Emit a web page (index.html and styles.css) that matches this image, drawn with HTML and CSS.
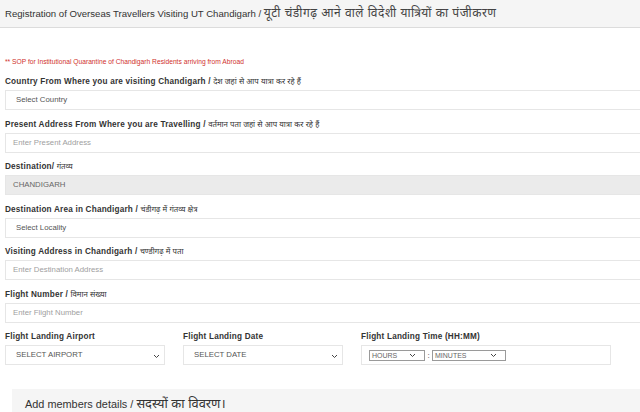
FILE: index.html
```html
<!DOCTYPE html>
<html lang="en">
<head>
    <meta charset="UTF-8">
    <meta name="viewport" content="width=device-width, initial-scale=1.0">
    <title>Registration of Overseas Travellers</title>
    <link rel="stylesheet" href="styles.css">
</head>
<body>
    <div class="page-header">
        <h1>Registration of Overseas Travellers Visiting UT Chandigarh / <span class="hi">यूटी चंडीगढ़ आने वाले विदेशी यात्रियों का पंजीकरण</span></h1>
    </div>

    <div class="form">
        <p class="sop">** SOP for Institutional Quarantine of Chandigarh Residents arriving from Abroad</p>

        <div class="group">
            <label>Country From Where you are visiting Chandigarh / <span class="hi">देश जहां से आप यात्रा कर रहे हैं</span></label>
            <div class="field">Select Country</div>
        </div>

        <div class="group">
            <label>Present Address From Where you are Travelling / <span class="hi">वर्तमान पता जहां से आप यात्रा कर रहे हैं</span></label>
            <div class="field placeholder">Enter Present Address</div>
        </div>

        <div class="group">
            <label>Destination/ <span class="hi">गंतव्य</span></label>
            <div class="field readonly">CHANDIGARH</div>
        </div>

        <div class="group">
            <label>Destination Area in Chandigarh / <span class="hi">चंडीगढ़ में गंतव्य क्षेत्र</span></label>
            <div class="field">Select Locality</div>
        </div>

        <div class="group">
            <label>Visiting Address in Chandigarh / <span class="hi">चण्डीगढ़ में पता</span></label>
            <div class="field placeholder">Enter Destination Address</div>
        </div>

        <div class="group">
            <label>Flight Number / <span class="hi">विमान संख्या</span></label>
            <div class="field placeholder">Enter Flight Number</div>
        </div>

        <div class="row">
            <div class="col">
                <label>Flight Landing Airport</label>
                <div class="field select">SELECT AIRPORT
                    <svg class="chev" width="7" height="5" viewBox="0 0 7 5"><path d="M1 1l2.5 2.5L6 1" fill="none" stroke="#444" stroke-width="1"/></svg>
                </div>
            </div>
            <div class="col">
                <label>Flight Landing Date</label>
                <div class="field select">SELECT DATE
                    <svg class="chev" width="7" height="5" viewBox="0 0 7 5"><path d="M1 1l2.5 2.5L6 1" fill="none" stroke="#444" stroke-width="1"/></svg>
                </div>
            </div>
            <div class="col wide">
                <label>Flight Landing Time (HH:MM)</label>
                <div class="field time">
                    <div class="mini hours">HOURS
                        <svg class="chev" width="7" height="5" viewBox="0 0 7 5"><path d="M1 1l2.5 2.5L6 1" fill="none" stroke="#444" stroke-width="1"/></svg>
                    </div>
                    <span class="colon">:</span>
                    <div class="mini minutes">MINUTES
                        <svg class="chev" width="7" height="5" viewBox="0 0 7 5"><path d="M1 1l2.5 2.5L6 1" fill="none" stroke="#444" stroke-width="1"/></svg>
                    </div>
                </div>
            </div>
        </div>

        <div class="members">
            <h2>Add members details / <span class="hi">सदस्यों का विवरण।</span></h2>
        </div>
    </div>
</body>
</html>
```

FILE: styles.css
```css
* {
    box-sizing: border-box;
    font-family: "Liberation Sans", Arial, "Noto Sans Devanagari", "Lohit Devanagari", "FreeSans", sans-serif;
}

html, body {
    overflow: hidden;
}

body {
    margin: 0;
    padding: 0;
    background-color: #ffffff;
    color: #333;
    width: 640px;
    height: 412px;
}

.page-header {
    width: 100%;
    height: 28px;
    background-color: #f5f5f5;
    border-bottom: 1px solid #dcdcdc;
    padding-left: 5px;
}

h1 {
    margin: 0;
    height: 27px;
    font-size: 9.6px;
    font-weight: normal;
    line-height: 27px;
    color: #333;
    white-space: nowrap;
}

h1 .hi {
    font-size: 12px;
    letter-spacing: 0.5px;
    line-height: 0;
    color: #444;
}

.form {
    width: 700px;
    padding: 0 5px;
}

.sop {
    margin: 29px 0 10px;
    font-size: 6.7px;
    line-height: 10px;
    color: #d0312d;
}

.group {
    margin-bottom: 9.5px;
}

label {
    display: block;
    height: 10px;
    font-size: 8.2px;
    font-weight: bold;
    letter-spacing: 0.2px;
    line-height: 10px;
    margin-bottom: 3px;
    color: #333;
    white-space: nowrap;
}

label .hi {
    font-weight: normal;
    font-size: 7.8px;
    letter-spacing: 0;
    line-height: 0;
}

.field {
    height: 20px;
    border: 1px solid #e6e6e6;
    background-color: #fff;
    padding-left: 10px;
    font-size: 7.8px;
    line-height: 18px;
    color: #555;
}

.field.placeholder {
    padding-left: 7px;
    color: #a0a0a0;
}

.field.readonly {
    background-color: #ebebeb;
    padding-left: 7px;
    color: #666;
}

.row {
    display: flex;
    gap: 18px;
}

.col {
    width: 160px;
}

.col.wide {
    width: 250px;
}

.field.select {
    position: relative;
    color: #555;
}

.chev {
    position: absolute;
    right: 4px;
    top: 8px;
}

.field.time {
    display: flex;
    align-items: center;
    padding-left: 7px;
}

.mini {
    position: relative;
    height: 11px;
    border: 1px solid #9a9a9a;
    font-size: 7px;
    line-height: 9px;
    padding-left: 2px;
    color: #666;
}

.mini .chev {
    top: 2px;
    right: 8px;
}

.mini.hours {
    width: 56px;
}

.mini.minutes {
    width: 74px;
}

.colon {
    width: 7px;
    text-align: center;
    font-size: 8px;
    line-height: 11px;
    color: #333;
}

.members {
    margin: 24px 0 0 7px;
    background-color: #f5f5f5;
    height: 60px;
    padding: 8px 13px;
}

h2 {
    margin: 0;
    height: 14px;
    font-size: 10.9px;
    font-weight: normal;
    line-height: 14px;
    color: #333;
}

h2 .hi {
    font-size: 12.9px;
    line-height: 0;
}
```
